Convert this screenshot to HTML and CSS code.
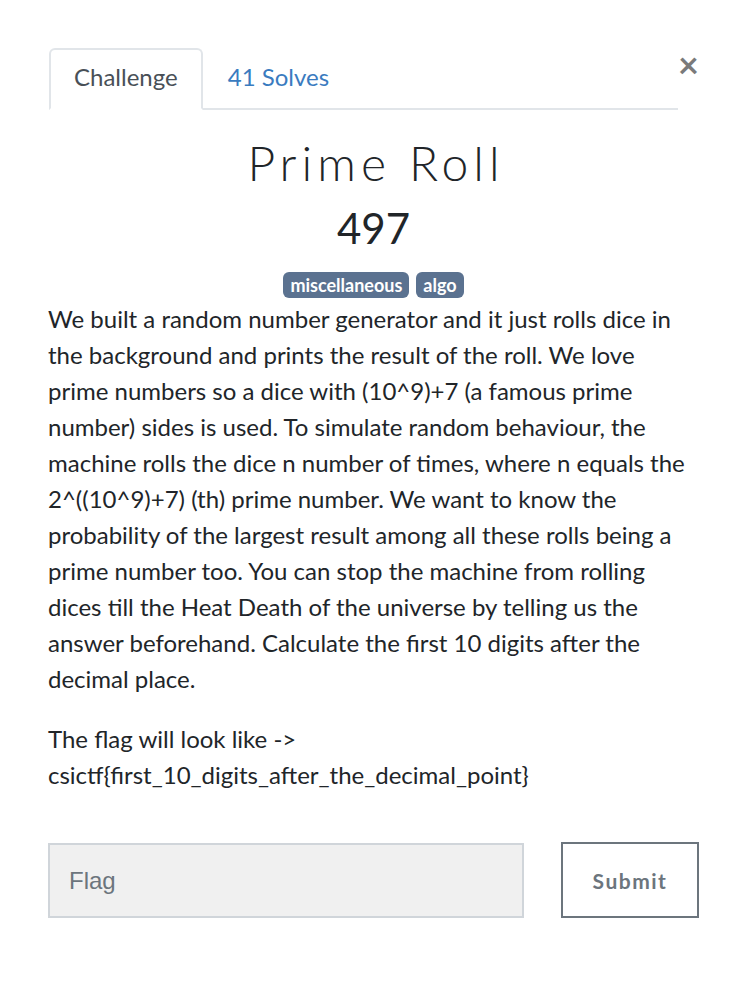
FILE: index.html
```html
<!DOCTYPE html>
<html lang="en">
<head>
<meta charset="utf-8">
<title>Prime Roll</title>
<link rel="stylesheet" href="styles.css">
</head>
<body>
<div class="page">
  <div class="modal">
    <div class="head">
      <ul class="tabs">
        <li class="tab active">Challenge</li>
        <li class="tab link">41 Solves</li>
      </ul>
      <button class="close" type="button">&times;</button>
    </div>
    <h2 class="name">Prime Roll</h2>
    <h3 class="value">497</h3>
    <div class="tags">
      <span class="badge">miscellaneous</span>
      <span class="badge">algo</span>
    </div>
    <div class="desc">
      <p>We built a random number generator and it just rolls dice in the background and prints the result of the roll. We love prime numbers so a dice with (10^9)+7 (a famous prime number) sides is used. To simulate random behaviour, the machine rolls the dice n number of times, where n equals the 2^((10^9)+7) (th) prime number. We want to know the probability of the largest result among all these rolls being a prime number too. You can stop the machine from rolling dices till the Heat Death of the universe by telling us the answer beforehand. Calculate the first 10 digits after the decimal place.</p>
      <p>The flag will look like -&gt;<br>csictf{first_10_digits_after_the_decimal_point}</p>
    </div>
    <form class="submit-row">
      <input class="flag" type="text" placeholder="Flag">
      <button class="submit" type="button">Submit</button>
    </form>
  </div>
  <div class="edge"></div>
</div>
</body>
</html>
```
FILE: styles.css
```css
html, body {
  margin: 0;
  padding: 0;
  background: #fff;
}
.page {
  display: flex;
  width: 748px;
  height: 990px;
  overflow: hidden;
}
.modal {
  width: 651px;
  padding: 48px 49px 0 48px;
  font-family: Lato, "Noto Sans", sans-serif;
  color: #212529;
  font-size: 24px;
  line-height: 36px;
}
.edge {
  width: 2px;
  flex: none;
  margin-left: auto;
  background: linear-gradient(to bottom,
    #666 0, #666 5px,
    #0c1a33 5px, #0c1a33 39px,
    #232323 39px, #232323 134px,
    #6b6b6b 134px, #6b6b6b 292px,
    #4a654c 292px, #4a654c 426px,
    #6b6b6b 426px, #6b6b6b 436px,
    #232323 436px, #232323 572px,
    #6b6b6b 572px, #6b6b6b 875px,
    #4a654c 875px, #4a654c 990px);
}
.head {
  display: flex;
  align-items: flex-start;
}
.tabs {
  flex: 1;
  display: flex;
  list-style: none;
  margin: 0 0 0 1px;
  padding: 0;
  border-bottom: 2px solid #e1e5e9;
}
.tab {
  padding: 9px 23px 13px 23px;
  margin-bottom: -2px;
  border: 2px solid transparent;
  border-radius: 6px 6px 0 0;
  font-size: 24px;
  line-height: 36px;
}
.tab.active {
  color: #495057;
  border-color: #e1e5e9 #e1e5e9 #fff;
  background: #fff;
}
.tab.link {
  color: #3a7bbf;
}
.close {
  flex: none;
  margin: 0;
  padding: 0;
  width: 21px;
  height: 32px;
  border: 0;
  background: none;
  font-family: Lato, "Liberation Sans", sans-serif;
  font-size: 36px;
  font-weight: 700;
  line-height: 22px;
  color: #7a7a7a;
  text-align: right;
}
.name {
  margin: 24px 0 11px;
  padding-left: 5px;
  text-align: center;
  font-size: 48px;
  line-height: 57.6px;
  font-weight: 300;
  letter-spacing: 5px;
}
.value {
  margin: 0 0 19px;
  text-align: center;
  font-size: 42px;
  line-height: 50.4px;
  font-weight: 400;
}
.tags {
  display: flex;
  justify-content: center;
  gap: 7px;
  margin: 0 0 3px;
  height: 26px;
}
.badge {
  display: block;
  padding: 4px 7px;
  font-size: 18px;
  font-weight: 700;
  line-height: 18px;
  color: #fff;
  background: #5b7290;
  border-radius: 6px;
}
.desc p {
  margin: 0 0 24px;
}
.submit-row {
  display: flex;
  margin-top: 49px;
  gap: 37px;
  align-items: flex-end;
}
.flag {
  width: 476px;
  height: 75px;
  box-sizing: border-box;
  padding: 0 19px;
  border: 2px solid #d0d5da;
  background: #f0f0f0;
  font-family: "Liberation Sans", Arial, sans-serif;
  font-size: 24px;
  color: #495057;
  outline: none;
}
.flag::placeholder {
  color: #6c757d;
}
.submit {
  width: 138px;
  height: 76px;
  box-sizing: border-box;
  border: 2px solid #6c757d;
  border-radius: 0;
  background: #fff;
  font-family: Lato, "Noto Sans", sans-serif;
  font-size: 21px;
  font-weight: 700;
  letter-spacing: 1.5px;
  color: #6c757d;
}
```
